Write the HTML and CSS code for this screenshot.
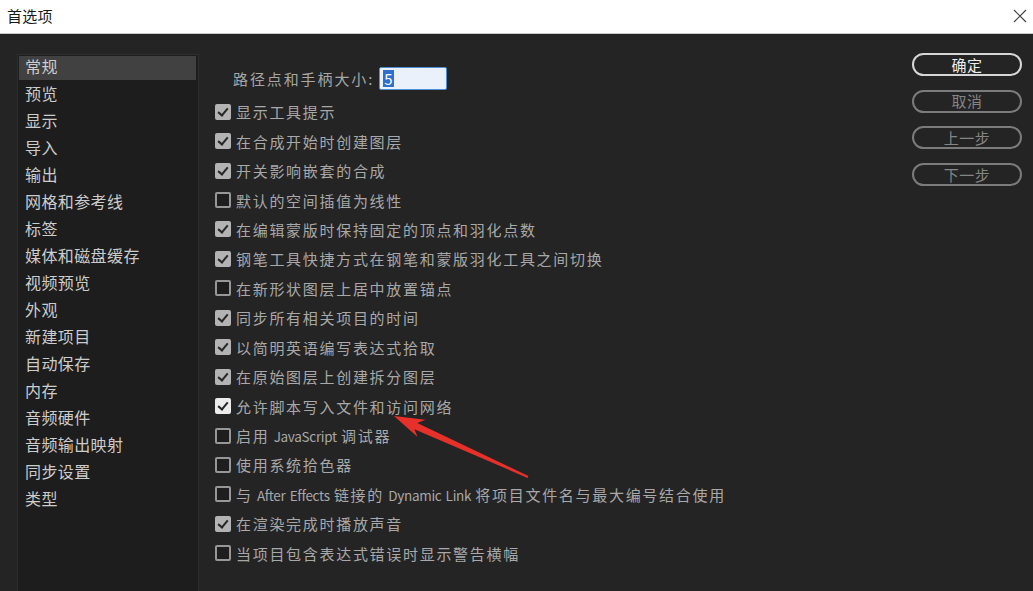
FILE: index.html
```html
<!DOCTYPE html>
<html lang="zh">
<head>
<meta charset="utf-8">
<link rel="stylesheet" href="styles.css">
</head>
<body>
<div class="window">
  <div class="titlebar">
    <span class="title">首选项</span>
    <svg class="close" width="14" height="14" viewBox="0 0 14 14"><path d="M1 1L13 13M13 1L1 13" stroke="#444" stroke-width="1.2" fill="none"/></svg>
  </div>
  <div class="content">
    <ul class="sidebar">
      <li class="active">常规</li>
      <li>预览</li>
      <li>显示</li>
      <li>导入</li>
      <li>输出</li>
      <li>网格和参考线</li>
      <li>标签</li>
      <li>媒体和磁盘缓存</li>
      <li>视频预览</li>
      <li>外观</li>
      <li>新建项目</li>
      <li>自动保存</li>
      <li>内存</li>
      <li>音频硬件</li>
      <li>音频输出映射</li>
      <li>同步设置</li>
      <li>类型</li>
    </ul>
    <div class="main">
      <div class="field">
        <span class="field-label">路径点和手柄大小:</span>
        <span class="input"><span class="sel">5</span></span>
      </div>
      <ul class="checks">
        <li><span class="box on"></span><span class="label">显示工具提示</span></li>
        <li><span class="box on"></span><span class="label">在合成开始时创建图层</span></li>
        <li><span class="box on"></span><span class="label">开关影响嵌套的合成</span></li>
        <li><span class="box"></span><span class="label">默认的空间插值为线性</span></li>
        <li><span class="box on"></span><span class="label">在编辑蒙版时保持固定的顶点和羽化点数</span></li>
        <li><span class="box on"></span><span class="label">钢笔工具快捷方式在钢笔和蒙版羽化工具之间切换</span></li>
        <li><span class="box"></span><span class="label">在新形状图层上居中放置锚点</span></li>
        <li><span class="box on"></span><span class="label">同步所有相关项目的时间</span></li>
        <li><span class="box on"></span><span class="label">以简明英语编写表达式拾取</span></li>
        <li><span class="box on"></span><span class="label">在原始图层上创建拆分图层</span></li>
        <li><span class="box on hot"></span><span class="label">允许脚本写入文件和访问网络</span></li>
        <li><span class="box"></span><span class="label">启用<span class="latin"> JavaScript </span>调试器</span></li>
        <li><span class="box"></span><span class="label">使用系统拾色器</span></li>
        <li><span class="box"></span><span class="label">与<span class="latin"> After Effects </span>链接的<span class="latin"> Dynamic Link </span>将项目文件名与最大编号结合使用</span></li>
        <li><span class="box on"></span><span class="label">在渲染完成时播放声音</span></li>
        <li><span class="box"></span><span class="label">当项目包含表达式错误时显示警告横幅</span></li>
      </ul>
    </div>
    <div class="buttons">
      <button class="btn primary">确定</button>
      <button class="btn">取消</button>
      <button class="btn">上一步</button>
      <button class="btn">下一步</button>
    </div>
  </div>
  <svg class="arrow" width="1033" height="591" viewBox="0 0 1033 591">
    <polygon points="394,416 425.5,419.8 417.3,422.9 528.4,476.1 527.6,477.9 414.4,429.3 417.6,437 " fill="#e8302a"/>
  </svg>
</div>
</body>
</html>
```

FILE: styles.css
```css
* { box-sizing: border-box; }
html, body { margin: 0; padding: 0; }
body {
  width: 1033px;
  height: 591px;
  overflow: hidden;
  font-family: "Noto Sans CJK SC", "Noto Sans", sans-serif;
  background: #242424;
}
.window { position: relative; width: 1033px; height: 591px; display: flex; flex-direction: column; }
.titlebar {
  height: 34px;
  flex: none;
  background: #ffffff;
  border-bottom: 1px solid #c9c9c9;
  display: flex;
  align-items: center;
  justify-content: space-between;
  padding: 0 6px 2px 7px;
}
.title { font-size: 15px; color: #1a1a1a; letter-spacing: 0.3px; }
.content {
  flex: 1;
  display: flex;
  align-items: flex-start;
  padding-top: 20px;
  min-height: 0;
}
.sidebar {
  list-style: none;
  margin: 0 0 0 17px;
  padding: 1px 2px 0 1px;
  width: 182px;
  height: 537px;
  background: #1d1d1d;
  border: 1px solid #2e2e2e;
  border-bottom: none;
  flex: none;
}
.sidebar li {
  height: 24px;
  line-height: 21px;
  margin-bottom: 3px;
  padding-left: 6px;
  font-size: 16px;
  color: #cccccc;
  letter-spacing: 0.4px;
}
.sidebar li.active { background: #414141; }
.main {
  flex: 1;
  margin-left: 16px;
  padding-top: 13px;
}
.field {
  display: flex;
  align-items: center;
  height: 23px;
  padding-left: 18px;
}
.field-label { font-size: 15px; color: #a6a6a6; letter-spacing: 1.9px; }
.input {
  margin-left: 5px;
  width: 68px;
  height: 23px;
  background: #eaf1fa;
  border: 1px solid #4b8fd6;
  border-radius: 2px;
  display: flex;
  align-items: center;
  padding-left: 3px;
}
.sel {
  background: #2f6fcf;
  color: #ffffff;
  font-size: 15px;
  line-height: 17px;
  padding: 0 1px;
}
.checks { list-style: none; margin: 7px 0 0 0; padding: 0; }
.checks li {
  height: 29.45px;
  display: flex;
  align-items: center;
  font-size: 15px;
  color: #a8a8a8;
  white-space: pre;
}
.label { letter-spacing: 1.7px; }
.latin { letter-spacing: -0.3px; word-spacing: 1.5px; font-size: 13.5px; }
.box {
  width: 16px;
  height: 16px;
  border: 2px solid #979797;
  border-radius: 2px;
  margin-right: 5px;
  flex: none;
  position: relative;
  background: #1e1e1e;
}
.box.on { background: #b3b3b3; border-color: #b3b3b3; }
.box.on::after {
  content: "";
  position: absolute;
  left: 3px;
  top: 0px;
  width: 4px;
  height: 8px;
  border: solid #262626;
  border-width: 0 2px 2px 0;
  transform: rotate(40deg);
}
.box.hot { background: #ececec; border-color: #ececec; }
.buttons {
  flex: none;
  display: flex;
  flex-direction: column;
  gap: 13.7px;
  margin-right: 11px;
  margin-top: -1px;
  width: 110px;
}
.btn {
  height: 23px;
  width: 110px;
  border-radius: 12px;
  background: transparent;
  border: 2px solid #7b7b7b;
  color: #858585;
  font-family: "Noto Sans CJK SC", sans-serif;
  font-size: 15px;
  letter-spacing: 0.5px;
  padding: 0;
  line-height: 18px;
}
.btn.primary { border-color: #d6d6d6; color: #eeeeee; }
.arrow { position: absolute; left: 0; top: 0; pointer-events: none; }
```
